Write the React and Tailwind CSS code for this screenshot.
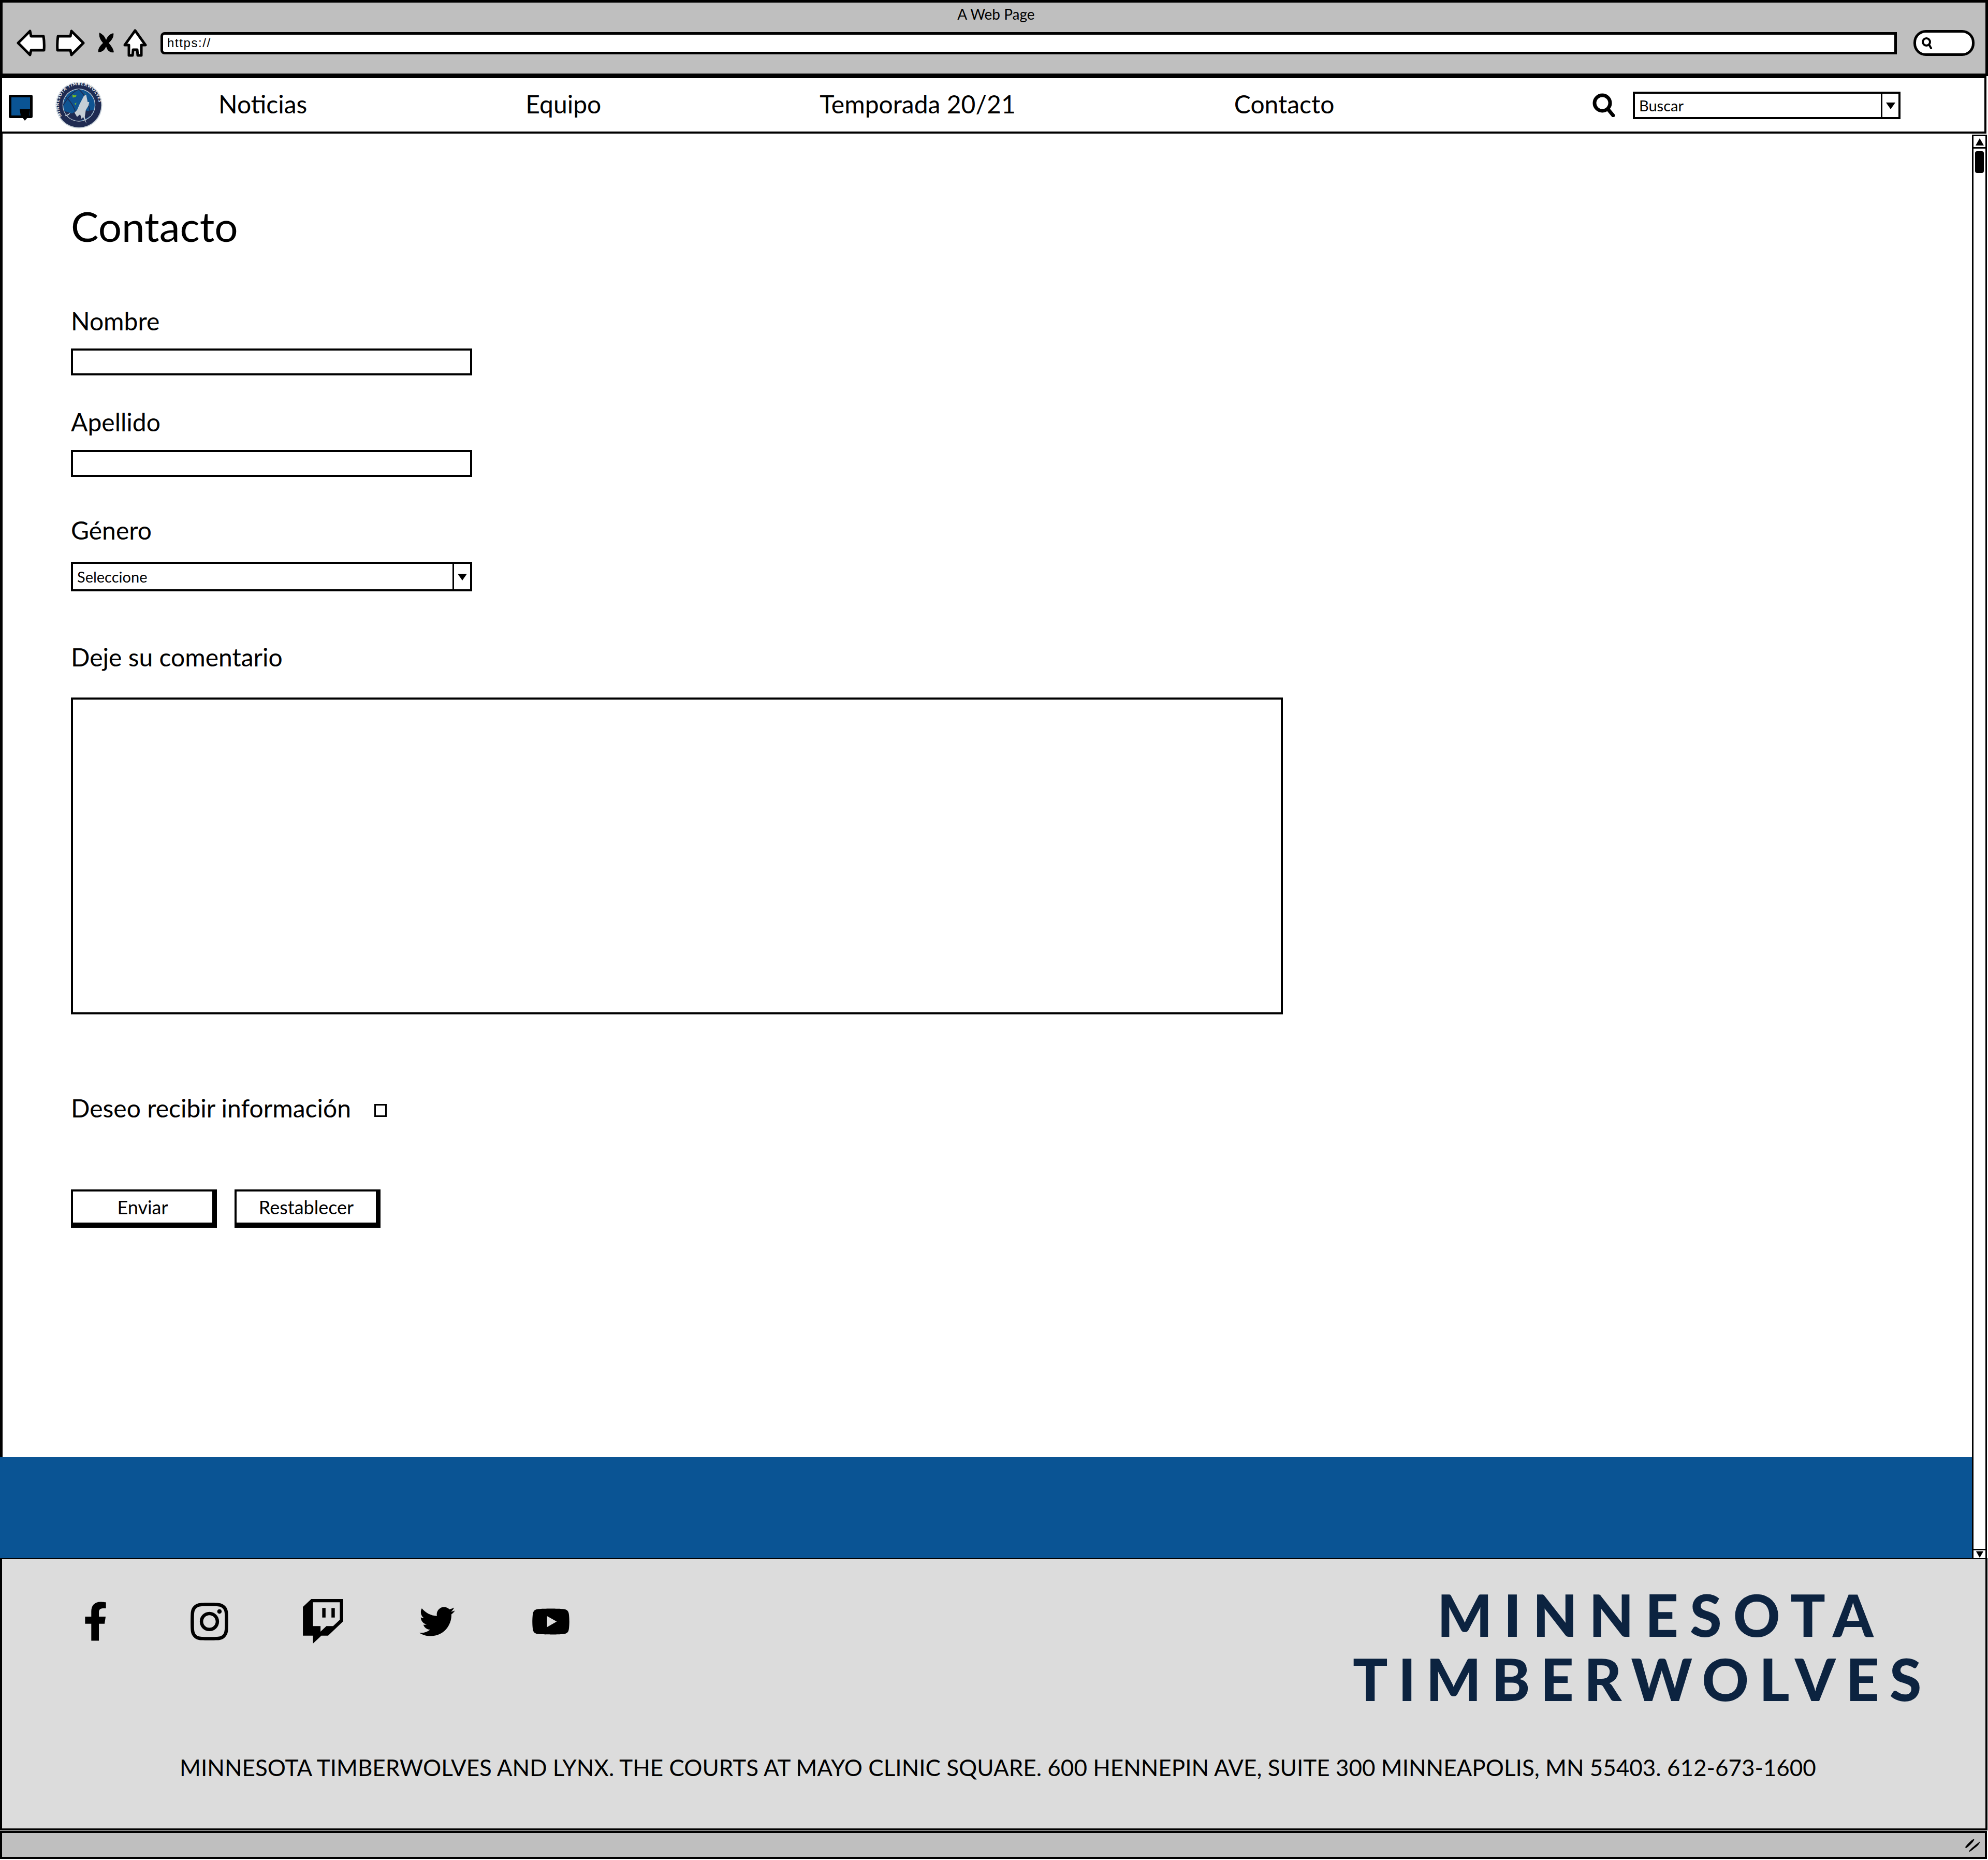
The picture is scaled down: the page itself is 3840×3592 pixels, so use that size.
import React from "react";
import { FaFacebookF, FaInstagram, FaTwitch, FaTwitter, FaYoutube } from "react-icons/fa";

function BackIcon({ flip }) {
  return (
    <svg viewBox="0 0 56 52" className={flip ? "w-[56px] h-[52px] -scale-x-100" : "w-[56px] h-[52px]"}>
      <path d="M3 26 L26 3 L28 13 L52 13 Q54 26 53 40 L28 40 L26 49 Z" fill="#fff" stroke="#000" strokeWidth="5" strokeLinejoin="round" />
    </svg>
  );
}

function StopIcon() {
  return (
    <svg viewBox="0 0 32 40" className="w-[32px] h-[40px]">
      <path d="M3 0 Q12 4 16 14 Q20 3 30 1 Q32 10 21 20 Q30 30 31 38 Q20 40 16 27 Q11 38 1 38 Q-1 30 10 20 Q1 10 3 0 Z" fill="#000" />
    </svg>
  );
}

function HomeIcon() {
  return (
    <svg viewBox="0 0 46 54" className="w-[46px] h-[54px]">
      <path d="M23 3 L43 31 L35 31 L35 51 L28 51 L27 40 L19 40 L18 51 L11 51 L11 31 L3 31 Z" fill="#fff" stroke="#000" strokeWidth="5" strokeLinejoin="round" />
    </svg>
  );
}

function Logo() {
  return (
    <svg viewBox="0 0 272 272" className="w-[91px] h-[90px] shrink-0">
      <defs>
        <path id="ring" d="M38 200 A117 117 0 1 1 234 200" />
      </defs>
      <circle cx="136" cy="136" r="136" fill="#c5ced6" />
      <circle cx="136" cy="136" r="130" fill="#1f2b52" />
      <circle cx="136" cy="136" r="96" fill="#c5ced6" />
      <circle cx="136" cy="136" r="92" fill="#0f5492" />
      <path d="M44 136 Q90 60 136 44 M60 90 Q110 130 130 225 M136 44 Q190 90 205 200" fill="none" stroke="#1f2b52" strokeWidth="5" />
      <path d="M50 170 L95 185 L135 160 L190 170 L222 165 Q205 215 136 228 Q75 225 50 170 Z" fill="#1f2b52" />
      <path d="M165 82 L178 75 L187 118 L196 118 L192 138 L176 165 L170 205 L180 245 L160 205 L152 218 L143 190 L125 205 L110 180 L125 165 L140 130 Z" fill="#c5ced6" />
      <path d="M55 195 Q75 190 86 178 Q80 198 58 200 Z" fill="#c5ced6" />
      <path d="M97 74 L112 80 L122 76 L118 88 L100 92 Z" fill="#78be20" />
      <path d="M110 128 L122 122 L116 136 Z" fill="#78be20" />
      <path d="M168 70 L176 68 L174 74 Z" fill="#78be20" />
      <text fill="#fff" fontSize="25" fontWeight="700" letterSpacing="3.4" className="font-['Lato']">
        <textPath href="#ring">MINNESOTA TIMBERWOLVES</textPath>
      </text>
    </svg>
  );
}

function ComboBox({ label, className }) {
  return (
    <div className={`flex items-stretch border-[4px] border-black bg-white ${className}`}>
      <span className="flex-1 text-[29px] leading-none self-center pl-[8px]">{label}</span>
      <span className="w-[34px] border-l-[3px] border-black flex items-center justify-center">
        <svg viewBox="0 0 18 14" className="w-[18px] h-[14px]">
          <path d="M0 1 L18 1 L9 14 Z" fill="#000" />
        </svg>
      </span>
    </div>
  );
}

function ScrollButton({ down }) {
  return (
    <div className={down ? "h-[18px] flex items-center justify-center border-t-[3px] border-black" : "h-[24px] flex items-center justify-center border-b-[3px] border-black"}>
      <svg viewBox="0 0 16 14" className={down ? "w-[14px] h-[14px] rotate-180" : "w-[16px] h-[14px]"}>
        <path d="M8 0 L16 14 L0 14 Z" fill="#000" />
      </svg>
    </div>
  );
}

const navItems = ["Noticias", "Equipo", "Temporada 20/21", "Contacto"];
const socialIcons = [
  { Icon: FaFacebookF, cls: "w-[47px] h-[90px]" },
  { Icon: FaInstagram, cls: "w-[83px] h-[83px]" },
  { Icon: FaTwitch, cls: "w-[86px] h-[90px]" },
  { Icon: FaTwitter, cls: "w-[85px] h-[69px]" },
  { Icon: FaYoutube, cls: "w-[96px] h-[67px]" },
];

function Field({ label, top, inputTop, children }) {
  return (
    <>
      <label className={`text-[48px] leading-[48px] ${top}`}>{label}</label>
      <div className={inputTop}>{children}</div>
    </>
  );
}

export default function App() {
  return (
    <div className="w-[3840px] h-[3592px] bg-white text-black font-['Lato',sans-serif] flex flex-col overflow-hidden">
      {/* browser top */}
      <header className="h-[147px] shrink-0 bg-[#bfbfbf] border-[5px] border-black flex flex-col">
        <div className="text-center text-[28px] leading-[44px] pl-[8px] mb-[4px]">A Web Page</div>
        <div className="h-[60px] flex items-center pl-[27px] pr-[21px]">
          <BackIcon />
          <div className="w-[20px]" />
          <BackIcon flip />
          <div className="w-[25px]" />
          <StopIcon />
          <div className="w-[17px]" />
          <HomeIcon />
          <div className="w-[26px]" />
          <div className="flex-1 h-[43px] bg-white border-[5px] border-black rounded-l-[8px] flex items-center pl-[8px]">
            <span className="font-['Liberation_Sans'] text-[24px] tracking-[1.6px]">https://</span>
          </div>
          <div className="w-[32px]" />
          <div className="w-[118px] h-[50px] bg-white border-[5px] border-black rounded-[24px] flex items-center pl-[10px]">
            <svg viewBox="0 0 24 24" className="w-[24px] h-[24px]">
              <circle cx="10" cy="10" r="7" fill="none" stroke="#000" strokeWidth="4" />
              <path d="M15 15 L19 22" stroke="#000" strokeWidth="4" strokeLinecap="round" />
            </svg>
          </div>
        </div>
      </header>

      {/* site nav */}
      <nav className="h-[111px] shrink-0 w-[3837px] border-[4px] border-black flex items-center pl-[13px] pr-[162px]">
        <div className="relative w-[46px] h-[45px] mt-[6px] bg-[#0a5494] border-[5px] border-black rounded-[3px] shrink-0">
          <svg viewBox="0 0 20 22" className="absolute right-[0px] -bottom-[10px] w-[20px] h-[22px]">
            <path d="M0 0 L20 0 L19 12 L10 22 L2 12 Z" fill="#000" />
          </svg>
        </div>
        <div className="w-[44px]" />
        <Logo />
        <div className="flex gap-[422px] ml-[224px] -mt-[4px] text-[48px] leading-[56px] whitespace-nowrap">
          {navItems.map((item) => (
            <a key={item}>{item}</a>
          ))}
        </div>
        <svg viewBox="0 0 44 46" className="w-[44px] h-[46px] ml-auto mr-[34px]">
          <circle cx="19" cy="19" r="15" fill="none" stroke="#000" strokeWidth="7" />
          <path d="M30 31 L40 43" stroke="#000" strokeWidth="7" strokeLinecap="round" />
        </svg>
        <ComboBox label="Buscar" className="w-[517px] h-[53px] mt-[2px]" />
      </nav>

      <div className="flex h-[2751px] shrink-0">
        <div className="w-[3809px] flex flex-col">
          <main className="h-[2556px] border-l-[5px] border-black pl-[132px] flex flex-col items-start">
            <h1 className="text-[80px] leading-[80px] mt-[138px]">Contacto</h1>
            <Field label="Nombre" top="mt-[120px]" inputTop="mt-[29px]">
              <input readOnly className="block w-[775px] h-[52px] border-[4px] border-black bg-white" />
            </Field>
            <Field label="Apellido" top="mt-[66px]" inputTop="mt-[30px]">
              <input readOnly className="block w-[775px] h-[52px] border-[4px] border-black bg-white" />
            </Field>
            <Field label="Género" top="mt-[79px]" inputTop="mt-[37px]">
              <ComboBox label="Seleccione" className="w-[775px] h-[57px]" />
            </Field>
            <Field label="Deje su comentario" top="mt-[103px]" inputTop="mt-[54px]">
              <textarea readOnly className="block w-[2341px] h-[612px] border-[4px] border-black bg-white resize-none" />
            </Field>
            <label className="flex items-center h-[48px] mt-[157px] text-[48px] leading-[48px]">
              Deseo recibir información
              <input type="checkbox" readOnly className="appearance-none w-[24px] h-[25px] border-[3px] border-black bg-white ml-[45px] mt-[8px]" />
            </label>
            <div className="flex gap-[34px] mt-[133px]">
              <button className="w-[282px] h-[74px] bg-white text-[36px] border-[4px] border-black border-r-[9px] border-b-[10px]">Enviar</button>
              <button className="w-[282px] h-[74px] bg-white text-[36px] border-[4px] border-black border-r-[9px] border-b-[10px]">Restablecer</button>
            </div>
          </main>
          <div className="h-[195px] bg-[#0a5494]" />
        </div>
        <aside className="w-[29px] mt-[2px] border-x-[3px] border-t-[3px] border-black flex flex-col">
          <ScrollButton />
          <div className="w-[17px] h-[42px] mt-[5px] ml-[3px] bg-black rounded-[4px]" />
          <div className="flex-1" />
          <ScrollButton down />
        </aside>
      </div>

      {/* footer */}
      <footer className="h-[526px] shrink-0 w-[3839px] bg-[#dcdcdc] border-t-[2px] border-x-[4px] border-b-[4px] border-black flex flex-col">
        <div className="flex items-start h-[376px] pl-[130px]">
          <div className="flex gap-[120px] mt-[70px]">
            {socialIcons.map(({ Icon, cls }, i) => (
              <div key={i} className="w-[100px] h-[100px] flex items-center justify-center">
                <Icon className={cls} />
              </div>
            ))}
          </div>
          <div className="ml-[1499px] mt-[45px] text-[#0c2340] font-black text-[112px] leading-[124px] whitespace-nowrap">
            <div className="pl-[163px] tracking-[22px]">MINNESOTA</div>
            <div className="tracking-[20px]">TIMBERWOLVES</div>
          </div>
        </div>
        <div className="text-center text-[44px] leading-[52px] whitespace-nowrap pl-[16px]">
          MINNESOTA TIMBERWOLVES AND LYNX. THE COURTS AT MAYO CLINIC SQUARE. 600 HENNEPIN AVE, SUITE 300 MINNEAPOLIS, MN 55403. 612-673-1600
        </div>
      </footer>

      {/* status bar */}
      <div className="mt-[1px] h-[54px] w-[3838px] shrink-0 bg-[#bfbfbf] border-[4px] border-black flex items-center justify-end pr-[8px]">
        <svg viewBox="0 0 32 26" className="w-[32px] h-[26px]">
          <path d="M2 17 Q10 6 19 1 Q21 4 10 14 Q5 19 3 19 Z M9 25 Q18 15 31 6 Q29 13 20 19 Q13 25 10 26 Z" fill="#000" />
        </svg>
      </div>
    </div>
  );
}
